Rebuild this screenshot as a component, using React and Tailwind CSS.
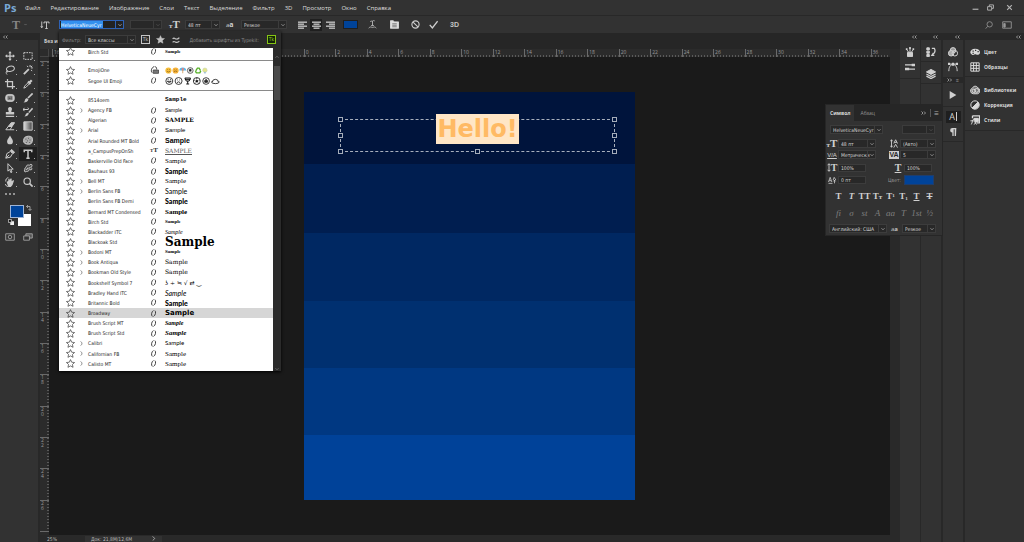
import React from "react";

const UI = "font-['Open_Sans','Noto_Sans',sans-serif]";
const SMALL = "font-['DejaVu_Sans_Condensed','DejaVu_Sans',sans-serif] text-[5px] leading-[6px]";

function Svg({ children, className = "size-[10px]", box = "0 0 12 12", fill = "none" }) {
  return (
    <svg viewBox={box} className={className} fill={fill} stroke="currentColor" strokeWidth="1.2" aria-hidden="true">
      {children}
    </svg>
  );
}

function Chevron({ className = "size-[4px]" }) {
  return (
    <svg viewBox="0 0 8 8" className={className} fill="none" stroke="currentColor" strokeWidth="1.6" aria-hidden="true">
      <path d="M1 2.5 4 5.5 7 2.5" />
    </svg>
  );
}

function DoubleChevron({ left = false }) {
  return (
    <svg viewBox="0 0 10 8" className="h-[4px] w-[5px]" fill="none" stroke="#b0b0b0" strokeWidth="1.6" aria-hidden="true">
      {left ? <path d="M4 1 1 4l3 3M9 1 6 4l3 3" /> : <path d="M1 1l3 3-3 3M6 1l3 3-3 3" />}
    </svg>
  );
}

function Select({ label, value, className = "", disabled = false }) {
  return (
    <span className={`relative flex h-[9px] items-center border border-[#3c3c3c] bg-[#282828] ${className}`}>
      <select
        aria-label={label}
        disabled={disabled}
        defaultValue={value}
        className={`h-full w-full appearance-none bg-transparent pl-[2px] text-[#d6d6d6] outline-none ${SMALL}`}
      >
        <option value={value}>{value}</option>
      </select>
      <span className={`pointer-events-none absolute inset-y-0 right-0 flex w-[8px] items-center justify-center border-l border-[#3c3c3c] ${disabled ? "text-[#505050]" : "text-[#a8a8a8]"}`}>
        <Chevron />
      </span>
    </span>
  );
}

function BigT({ a, b, className = "" }) {
  return (
    <span className={`flex items-baseline font-['Liberation_Serif',serif] font-bold leading-none text-[#d0d0d0] ${className}`}>
      <span className="text-[7px]">{a}</span>
      <span className="text-[11px]">{b}</span>
    </span>
  );
}

/* ---------- menu and options ---------- */

const MENUS = ["Файл", "Редактирование", "Изображение", "Слои", "Текст", "Выделение", "Фильтр", "3D", "Просмотр", "Окно", "Справка"];

function MenuBar() {
  return (
    <header className="flex h-[15px] shrink-0 items-center pl-[4px] pr-[11px]">
      <span className="w-[21px] font-['Open_Sans',sans-serif] text-[11px] font-bold leading-none text-[#79a9d6]">Ps</span>
      <nav className="flex gap-[10px]">
        {MENUS.map((m) => (
          <button key={m} className="text-[6px] leading-[10px] text-[#dedede]">{m}</button>
        ))}
      </nav>
      <div className="ml-auto flex items-center gap-[8px] text-[#b4b4b4]">
        <button aria-label="Свернуть"><Svg className="size-[7px]"><path d="M1 9h10" strokeWidth="2" /></Svg></button>
        <button aria-label="Восстановить"><Svg className="size-[7px]"><path d="M1 4.500h7v6H1zM4 4V1.500h7v6H8.500" strokeWidth="1.600" /></Svg></button>
        <button aria-label="Закрыть" className="ml-[4px]"><Svg className="size-[7px]"><path d="M2 2l8 8M10 2l-8 8" strokeWidth="2" /></Svg></button>
      </div>
    </header>
  );
}

function AlignIcon({ kind }) {
  const x = { left: [0, 0, 0, 0], center: [0, 1.5, 0, 1.5], right: [0, 3, 0, 3] }[kind];
  return (
    <svg viewBox="0 0 9 8" className="h-[8px] w-[9px]" fill="#bdbdbd" aria-hidden="true">
      <rect x={x[0]} y="0.500" width="9" height="1.400" />
      <rect x={x[1]} y="2.500" width="6" height="1.400" />
      <rect x={x[2]} y="4.500" width="9" height="1.400" />
      <rect x={x[3]} y="6.500" width="6" height="1.400" />
    </svg>
  );
}

function OptionsBar() {
  return (
    <section aria-label="Параметры" className="flex h-[18px] shrink-0 items-center border-t border-[#282828] pl-[12px] pr-[12px]">
      <button aria-label="Инструмент Текст" className="flex w-[25px] items-center gap-[4px] text-[#858585]">
        <span className="font-['Liberation_Serif',serif] text-[12px] font-bold leading-none">T</span>
        <Chevron className="size-[3px]" />
      </button>
      <button aria-label="Ориентация текста" className="flex w-[22px] items-center pl-[3px]">
        <svg viewBox="0 0 18 16" className="h-[8px] w-[10px]" fill="none" stroke="#d0d0d0" strokeWidth="1.800" aria-hidden="true">
          <path d="M2.500 1v12M.5 10.500l2 3 2-3M7 5V2h10v3M12 2v13M9.500 15h5" />
        </svg>
      </button>
      <div className="flex h-[9px] w-[65px] items-center border border-[#2f62b5] bg-[#222222] pl-[1px]">
        <input aria-label="Шрифт" defaultValue="HelveticaNeueCyr" className={`h-[7px] w-[42px] bg-[#3390ef] text-white outline-none ${SMALL}`} />
        <button aria-label="Открыть список шрифтов" className="ml-auto flex h-full w-[8px] items-center justify-center border-l border-[#2f62b5] text-[#bdbdbd]"><Chevron /></button>
      </div>
      <Select label="Начертание" value="" disabled className="ml-[6px] w-[32px]" />
      <BigT a="т" b="T" className="ml-[7px] w-[16px]" />
      <Select label="Кегль" value="48 пт" className="w-[35px]" />
      <span className="ml-[6px] flex w-[15px] items-end leading-none text-[#d0d0d0]">
        <span className="text-[6px]">a</span><span className="text-[7px] font-bold">a</span>
      </span>
      <Select label="Сглаживание" value="Резкое" className="w-[46px]" />
      <div className="ml-[9px] flex items-center gap-[2px]">
        <button aria-label="По левому краю" className="flex size-[12px] items-center justify-center"><AlignIcon kind="left" /></button>
        <button aria-label="По центру" aria-pressed="true" className="flex size-[12px] items-center justify-center bg-[#1f1f1f]"><AlignIcon kind="center" /></button>
        <button aria-label="По правому краю" className="flex size-[12px] items-center justify-center"><AlignIcon kind="right" /></button>
      </div>
      <button aria-label="Цвет текста" className="ml-[7px] h-[9px] w-[15px] border border-[#1f1f1f] bg-[#004399]" />
      <button aria-label="Деформированный текст" className="ml-[10px] text-[#b8b8b8]">
        <Svg className="size-[9px]"><path d="M3 2.500C4 .5 5 2 6 1.500S8 0 9 1.500M6 1.500v6M4 7.500h4M1 11c2-3 3.500-1 5-1s3-2 5 1" /></Svg>
      </button>
      <button aria-label="Панели символов и абзацев" className="ml-[13px] text-[#dcdcdc]">
        <Svg className="size-[9px]"><path d="M.5 1h4l1 1.500h6V11H.5z" fill="currentColor" /><path d="M3 5h6M3 7h6M3 9h6" stroke="#555" strokeWidth=".9" /></Svg>
      </button>
      <button aria-label="Отменить" className="ml-[12px] text-[#cfcfcf]"><Svg className="size-[9px]"><circle cx="6" cy="6" r="4.800" strokeWidth="1.500" /><path d="M2.800 2.800l6.400 6.400" strokeWidth="1.500" /></Svg></button>
      <button aria-label="Применить" className="ml-[9px] text-[#cfcfcf]"><Svg className="size-[9px]"><path d="M1 6.500l3.500 4L11.500 1.500" strokeWidth="1.800" /></Svg></button>
      <button className="ml-[12px] font-['Liberation_Sans',sans-serif] text-[7px] font-bold leading-none text-[#c4c4c4]">3D</button>
      <div className="ml-auto flex items-center gap-[9px] text-[#999999]">
        <button aria-label="Поиск"><Svg className="size-[8px]"><circle cx="7" cy="5" r="4" /><path d="M4 8l-3 3.500" /></Svg></button>
        <button aria-label="Рабочая среда"><Svg className="h-[8px] w-[10px]" box="0 0 14 11"><path d="M1 1h12v9H1z" /><path d="M2.500 3.500h2v5h-2z" fill="currentColor" /></Svg></button>
      </div>
    </section>
  );
}

/* ---------- toolbox ---------- */

const TOOLS = [
  ["Перемещение", <><path d="M6 1.500v9M1.500 6h9" strokeWidth="1.500" /><path d="M6 0l2 2.600H4zM6 12l2-2.600H4zM0 6l2.600-2v4zM12 6L9.400 4v4z" fill="currentColor" stroke="none" /></>],
  ["Прямоугольная область", <path d="M1 2h10v8H1z" strokeDasharray="2 1.100" />],
  ["Лассо", <><ellipse cx="6.500" cy="4.500" rx="4.800" ry="3.200" transform="rotate(-12 6.500 4.500)" /><path d="M2.500 6.500c-1.500 1 0 2.500 1 1.500S2 7 1.500 8.500s.5 2 1 3" /></>],
  ["Волшебная палочка", <><path d="M1 11l6-6" strokeWidth="2.200" /><path d="M8.500 0v2.500M11.800 3.500H9.500M5 1l1 1.500M11 7L9.500 6M11 1L9.500 2.500" /></>],
  ["Рамка", <path d="M3 0v9h9M0 3h9v9" strokeWidth="1.500" />],
  ["Пипетка", <><path d="M1 11l1-2.500 4.500-4.500 1.500 1.500L3.500 10z" /><path d="M6 3l3 3M7.500 4.500L10.500 1.500" strokeWidth="2.600" /></>],
  ["Заплатка", <><rect x="1" y="2" width="10" height="8" rx="2.500" fill="currentColor" /><path d="M3.500 4h5v4h-5z" fill="#444" stroke="#777" /><path d="M0 6h12M6 1v10" strokeWidth=".7" strokeDasharray="1 1" /></>],
  ["Кисть", <><path d="M11.500.5L6 6" strokeWidth="2" /><path d="M6.500 7.500C6 10 4 11.500.5 11.500c1.500-1 1.500-2 2-3.500S5 5.500 6.500 7.500z" fill="currentColor" stroke="none" /></>],
  ["Штамп", <path d="M6 0a2.300 2.300 0 0 1 2 3.500L7.500 6H11v3H1V6h3.500L4 3.500A2.300 2.300 0 0 1 6 0zM1 10.500h10V12H1z" fill="currentColor" stroke="none" />],
  ["Архивная кисть", <><path d="M11.500 1.500L7 6.500" strokeWidth="1.800" /><path d="M7 7.500C6.500 10 4.500 11.500 1.500 11.500c1.500-1 1.500-2 2-3S5.500 6 7 7.500z" fill="currentColor" stroke="none" /><path d="M0 3h6C7 3 7 1 5.500 1M1.800 1L0 3l1.800 2" /></>],
  ["Ластик", <><path d="M4 6.500L7.500 2h4L8.500 6.500z" fill="currentColor" /><path d="M1 10.500l3-4h4.500L6 10.500zM6 10.500h5" /></>],
  ["Градиент", <><defs><linearGradient id="grad"><stop stopColor="#e0e0e0" /><stop offset="1" stopColor="#444" /></linearGradient></defs><path d="M1 1h10v10H1z" fill="url(#grad)" /></>],
  ["Размытие", <path d="M6 .5c1.500 3 3.500 4.700 3.500 7.200a3.500 3.500 0 0 1-7 0C2.500 5.200 4.500 3.500 6 .5z" fill="currentColor" stroke="none" />],
  ["Губка", <><path d="M2 3c2-2 7-2 8.500-.5s1 5 0 7-6.500 2-8.500.5-1.500-5 0-7z" fill="#aaa" /><path d="M3 5h1M6 4h1M5 7h1M8 6h1M3.500 9h1M7.500 9h1" stroke="#555" /></>],
  ["Перо", <><path d="M1 11l1.200-5.500L6.500 3 9 5.500 6.500 9.800z" /><path d="M1 11l4-4M6.500 2L8 .5 11.500 4 10 5.500z" fill="currentColor" /></>],
  ["Текст", <path d="M1.500 4V1.500h9V4M6 1.500v9.500M4 11h4" strokeWidth="1.800" />],
  ["Стрелка", <path d="M3.500.8v9l2-2 1.500 3.700 1.400-.6-1.500-3.500h3z" />],
  ["Произвольная фигура", <path d="M1.500 9.500c1.500-1.500 0-3.500 1.500-4s.5-2.500 2.500-3 1.500 1 3-.5 3 .5 2 2-1 1 0 2.500-1 2-2.500 1.500-1 2.500-2.500 2S2.500 12 1.500 9.500zM4 8.500l2-3M6.500 7.500l2.500-3" fill="#4c4c4c" />],
  ["Поворот вида", <><path d="M2 6l2-1.500V2h1.500v2L7 1.500 8 2v3l2-1.500.8 1L9 9.500 7 12H4z" fill="currentColor" stroke="none" /><path d="M1 5.500C.5 3 2 1 4 .8M.5 8.500C1 10.500 2 11 3.500 11.500" /></>],
  ["Масштаб", <><circle cx="5" cy="5" r="3.800" strokeWidth="1.400" /><path d="M8 8l3.500 3.500" strokeWidth="2" /></>],
];

function Toolbox() {
  return (
    <aside aria-label="Инструменты" className="flex w-[40px] shrink-0 flex-col border-r-2 border-[#282828]">
      <div className="flex h-[7px] shrink-0 items-center bg-[#282828] pl-[3px]"><DoubleChevron left /></div>
      <div className="mt-[9px] grid grid-cols-2 px-[1px]">
        {TOOLS.map(([name, art]) => (
          <button
            key={name}
            aria-label={name}
            className={`relative flex h-[14px] items-center justify-center text-[#c9c9c9] ${name === "Текст" ? "bg-[#1f1f1f]" : ""}`}
          >
            <Svg className="size-[10px]">{art}</Svg>
            <span className="absolute bottom-[2px] right-[2px] size-[1px] bg-[#aaaaaa]" />
          </button>
        ))}
      </div>
      <button aria-label="Изменить панель" className="ml-[5px] mt-[1px] flex h-[8px] w-[10px] items-center justify-between">
        <i className="size-[2px] rounded-full bg-[#b5b5b5]" /><i className="size-[2px] rounded-full bg-[#b5b5b5]" /><i className="size-[2px] rounded-full bg-[#b5b5b5]" />
      </button>
      <div className="ml-[8px] mt-[7px] grid w-[26px] grid-cols-[3px_9px_4px_10px] grid-rows-[9px_4px_8px]">
        <button aria-label="Основной цвет" className="z-10 col-start-1 col-end-4 row-start-1 row-end-3 ml-[2px] border border-[#9fb4d4] bg-[#004399]" />
        <button aria-label="Фоновый цвет" className="col-start-3 col-end-5 row-start-2 row-end-4 -ml-[2px] mr-[3px] bg-white" />
        <button aria-label="Поменять цвета" className="col-start-4 row-start-1 flex items-start pl-[2px] text-[#b5b5b5]"><Svg className="size-[6px]"><path d="M1 3h7v7M4 0L1 3l3 3M5 8l3 3 3-3" strokeWidth="1.600" /></Svg></button>
        <button aria-label="Цвета по умолчанию" className="col-start-1 col-end-3 row-start-3 flex items-center">
          <svg viewBox="0 0 8 8" className="size-[6px]" aria-hidden="true"><path d="M3 3h5v5H3z" fill="#eee" /><path d="M.5.5h4v4h-4z" fill="#111" stroke="#ddd" /></svg>
        </button>
      </div>
      <div className="mt-[7px] grid grid-cols-2 px-[1px] text-[#a8a8a8]">
        <button aria-label="Быстрая маска" className="flex justify-center"><Svg className="h-[8px] w-[10px]" box="0 0 14 11"><path d="M1 1h12v9H1z" /><circle cx="7" cy="5.500" r="2.500" fill="#333" /></Svg></button>
        <button aria-label="Режим экрана" className="flex justify-center"><Svg className="h-[8px] w-[10px]" box="0 0 14 11"><path d="M4 1h9v6H4z" fill="#555" /><path d="M1 4h8v6H1z" fill="#333" /></Svg></button>
      </div>
    </aside>
  );
}

/* ---------- font list ---------- */

const FONTS = [
  ["8514oem", 0, "", "font-['Liberation_Mono',monospace] font-bold text-[6px]"],
  ["Agency FB", 1, "O", "font-['Liberation_Sans',sans-serif] text-[5px]"],
  ["Algerian", 0, "O", "font-['DejaVu_Serif',serif] font-bold text-[6px] uppercase"],
  ["Arial", 1, "O", "font-['Liberation_Sans',sans-serif] text-[6px]"],
  ["Arial Rounded MT Bold", 0, "O", "font-['Liberation_Sans',sans-serif] font-bold text-[7px]"],
  ["a_CampusPrepOnSh", 0, "T", "font-['DejaVu_Serif',serif] text-[6px] uppercase underline text-[#555555]"],
  ["Baskerville Old Face", 0, "O", "font-['Liberation_Serif',serif] text-[7px]"],
  ["Bauhaus 93", 0, "O", "font-['Lato',sans-serif] font-black text-[7px]"],
  ["Bell MT", 1, "O", "font-['Liberation_Serif',serif] text-[7px]"],
  ["Berlin Sans FB", 1, "O", "font-['Lato',sans-serif] text-[7px]"],
  ["Berlin Sans FB Demi", 0, "O", "font-['Lato',sans-serif] font-black text-[7px]"],
  ["Bernard MT Condensed", 0, "O", "font-['Liberation_Serif',serif] font-bold text-[7px]"],
  ["Birch Std", 0, "O", "font-['Liberation_Serif',serif] font-bold text-[5px]"],
  ["Blackadder ITC", 0, "O", "font-['Liberation_Serif',serif] italic text-[6px]"],
  ["Blackoak Std", 0, "O", "font-['DejaVu_Serif',serif] font-black text-[12px]"],
  ["Bodoni MT", 1, "O", "font-['Liberation_Serif',serif] font-bold text-[5px]"],
  ["Book Antiqua", 1, "O", "font-['DejaVu_Serif',serif] text-[6px]"],
  ["Bookman Old Style", 1, "O", "font-['DejaVu_Serif',serif] text-[6px]"],
  ["Bookshelf Symbol 7", 0, "O", "font-['DejaVu_Sans',sans-serif] text-[6px]"],
  ["Bradley Hand ITC", 0, "O", "font-['Lato',sans-serif] italic text-[7px]"],
  ["Britannic Bold", 0, "O", "font-['Lato',sans-serif] font-black text-[7px]"],
  ["Broadway", 0, "O", "font-['DejaVu_Sans',sans-serif] font-bold text-[7px]"],
  ["Brush Script MT", 0, "O", "font-['Liberation_Serif',serif] font-bold italic text-[6px]"],
  ["Brush Script Std", 0, "O", "font-['Liberation_Serif',serif] font-bold italic text-[7px]"],
  ["Calibri", 1, "O", "font-['Lato',sans-serif] text-[6px]"],
  ["Californian FB", 1, "O", "font-['Liberation_Serif',serif] text-[7px]"],
  ["Calisto MT", 1, "O", "font-['Liberation_Serif',serif] text-[7px]"],
];

function BigTDark() {
  return (
    <span className="flex items-baseline font-['Liberation_Serif',serif] font-bold leading-none">
      <span className="text-[5px]">T</span><span className="text-[7px]">T</span>
    </span>
  );
}

function FontRow({ name, expandable, kind, selected, children }) {
  return (
    <li role="option" aria-selected={!!selected} className={`flex min-h-0 flex-1 items-center pl-[7px] text-black ${selected ? "bg-[#d6d6d6]" : ""}`}>
      <button aria-label={`В избранное: ${name}`} className="w-[13px]">
        <Svg className="size-[9px]"><path d="M6 .8l1.600 3.500 3.800.4-2.800 2.600.8 3.800L6 9.200l-3.400 1.900.8-3.800L.6 4.700l3.800-.4z" stroke="#333" strokeWidth=".9" /></Svg>
      </button>
      <span className="w-[9px] text-[#444444]">
        {expandable ? <Svg className="size-[5px]"><path d="M4 1c4 3 4 7 0 10" strokeWidth="1.500" /></Svg> : null}
      </span>
      <span className={`w-[62px] whitespace-nowrap text-[#222222] ${SMALL}`}>{name}</span>
      <span className="flex w-[15px] text-[#333333]">
        {kind === "O" && <Svg className="h-[7px] w-[7px]"><path d="M6 1C2.800 2 1.500 9 4 11M6 11c3.500-1.500 4.800-8.500 2.300-10" strokeWidth="1.600" /></Svg>}
        {kind === "T" && <BigTDark />}
        {kind === "E" && <Svg className="h-[8px] w-[9px]"><path d="M5.500 1C1.500 2 0 8 2.500 10M6.500 1c2 0 3 2 2.500 4" strokeWidth="1.500" /><path d="M4 6h8v5H4z" fill="#777" stroke="#444" /></Svg>}
      </span>
      {children}
    </li>
  );
}

function ColourEmoji() {
  return (
    <svg viewBox="0 0 126 20" className="h-[7px] w-[43px]" aria-hidden="true">
      <circle cx="10" cy="10" r="9" fill="#f6bd3a" /><path d="M5 12q5 5 10 0" stroke="#8a6214" strokeWidth="2" fill="none" /><path d="M6 7h2M12 7h2" stroke="#8a6214" strokeWidth="2" />
      <circle cx="31" cy="10" r="9" fill="#f6b23a" /><path d="M26 14q5-5 10 0M27 8h2M33 8h2" stroke="#8a6214" strokeWidth="2" fill="none" />
      <path d="M42 10a10 9 0 0 1 20 0z" fill="#5bb7e8" /><path d="M49 3h6v7h-6z" fill="#e8827a" /><path d="M52 9v9" stroke="#c98a3a" strokeWidth="2" />
      <circle cx="74" cy="10" r="8.500" fill="#e8e8e8" stroke="#333" strokeWidth="2" /><path d="M70 8l4-3 4 3-1.500 5h-5z" fill="#222" />
      <path d="M90 11l5-8h5l4 7M105 11l-3 6H92l-3-5" stroke="#56b028" strokeWidth="4" fill="none" />
      <circle cx="117" cy="9" r="6.500" fill="#e9e58a" stroke="#bdd4b8" strokeWidth="1.500" /><path d="M117 14v5" stroke="#8fb8d8" strokeWidth="4" />
    </svg>
  );
}

function LineEmoji() {
  return (
    <svg viewBox="0 0 166 24" className="h-[8px] w-[55px]" fill="none" stroke="#111" strokeWidth="2.400" aria-hidden="true">
      <circle cx="13" cy="12" r="10.500" /><path d="M7 13q6 8 12 0zM8 8h3M15 8h3" />
      <circle cx="41" cy="12" r="10.500" /><path d="M36 17q5-5 10 0M37 9h2M43 9h2" />
      <path d="M60 3h17l-4 9h-9zM68.500 12v9M64 21h9M60 7h17" strokeWidth="3" />
      <circle cx="96" cy="12" r="10.500" /><path d="M93 11l3-2 3 2-1 4h-4z" fill="#111" /><path d="M96 2v4M87 9l3 1M105 9l-3 1M90 20l2-3M102 20l-2-3" />
      <circle cx="124" cy="12" r="10" /><path d="M120 16v-5l4-4 4 4v5z" fill="#333" />
      <path d="M143 15a9 8 0 0 1 18 0h3q-2 5-12 5t-12-5z" />
    </svg>
  );
}

function FontMenu() {
  return (
    <section aria-label="Список шрифтов" className="absolute left-[59px] top-[31px] z-20 flex h-[340px] w-[222px] flex-col bg-[#2b2b2b] shadow-[0_1px_3px_#000000]">
      <div className={`flex h-[17px] shrink-0 items-center pl-[3px] pr-[5px] text-[#8c8c8c] ${SMALL}`}>
        <span className="w-[23px]">Фильтр:</span>
        <Select label="Фильтр" value="Все классы" className="w-[51px]" />
        <button aria-label="Шрифты Typekit" className="ml-[5px] flex size-[9px] items-center justify-center border border-[#c4c4c4] text-[5px] leading-none text-[#c4c4c4]">Tk</button>
        <button aria-label="Избранные" className="ml-[6px] text-[#c4c4c4]"><Svg className="size-[9px]" fill="currentColor"><path d="M6 .8l1.600 3.500 3.800.4-2.800 2.600.8 3.800L6 9.200l-3.400 1.900.8-3.800L.6 4.700l3.800-.4z" strokeWidth=".5" /></Svg></button>
        <button aria-label="Похожие" className="ml-[7px] text-[#c4c4c4]"><Svg className="size-[8px]"><path d="M1 4.500c2-3 4 0 5 0s3 1 5-2M1 9.500c2-3 4 0 5 0s3 1 5-2" strokeWidth="1.700" /></Svg></button>
        <a href="#typekit" className="ml-auto whitespace-nowrap">Добавить шрифты из Typekit:</a>
        <button aria-label="Добавить из Typekit" className="ml-[8px] flex size-[9px] items-center justify-center border border-[#86c514] bg-[#142408] text-[5px] leading-none text-[#9ad82a]">Tk</button>
      </div>
      <div className="flex min-h-0 flex-1">
        <div className="flex w-[214px] flex-col bg-white">
          <ul role="listbox" aria-label="Недавние шрифты" className="flex h-[13px] shrink-0 flex-col overflow-hidden border-b border-[#8a8a8a] pb-[5px]">
            <FontRow name="Birch Std" kind="O"><span className="font-['Liberation_Serif',serif] text-[5px] font-bold leading-[6px]">Sample</span></FontRow>
          </ul>
          <ul role="listbox" aria-label="Символьные шрифты" className="flex h-[30px] shrink-0 flex-col border-b border-[#8a8a8a] py-[4px]">
            <FontRow name="EmojiOne" kind="E"><ColourEmoji /></FontRow>
            <FontRow name="Segoe UI Emoji" kind="O"><LineEmoji /></FontRow>
          </ul>
          <ul role="listbox" aria-label="Все шрифты" className="flex min-h-0 flex-1 flex-col pb-[2px] pt-[4px]">
            {FONTS.map(([name, expandable, kind, style]) => (
              <FontRow key={name} name={name} expandable={expandable} kind={kind} selected={name === "Broadway"}>
                <span className={`leading-[10px] ${style}`}>{name === "Bookshelf Symbol 7" ? "ʖ ÷ ≒ √ ⇄ ‿" : "Sample"}</span>
              </FontRow>
            ))}
          </ul>
        </div>
        <div className="flex flex-1 flex-col items-center justify-between text-[#777777]">
          <span className="flex h-[18px] rotate-180 items-center"><Chevron /></span>
          <div className="mb-auto h-[34px] w-full border-x border-[#2b2b2b] bg-[#4a4a4a]" />
          <Chevron />
        </div>
      </div>
    </section>
  );
}

/* ---------- document ---------- */

const H_MARKS = Array.from({ length: 27 }, (_, i) => Math.abs(i * 2 - 16));
const V_MARKS = Array.from({ length: 15 }, (_, i) => Math.abs(i * 2 - 2));

function HorizontalRuler() {
  return (
    <div className="h-[8px] flex-1 overflow-hidden bg-[#2b2b2b] pl-[3px]">
      <div className="grid h-full w-[850px] grid-cols-[repeat(27,minmax(0,1fr))]">
        {H_MARKS.map((n, i) => (
          <div key={i} className="border-l border-[#6a6a6a] bg-[repeating-linear-gradient(90deg,#5a5a5a_0_1px,transparent_1px_3px)] bg-[length:100%_2px] bg-bottom bg-no-repeat pl-[1px] text-[5px] leading-[6px] text-[#9a9a9a]">{n}</div>
        ))}
      </div>
    </div>
  );
}

function VerticalRuler() {
  return (
    <div className="w-[9px] shrink-0 overflow-hidden bg-[#2b2b2b] pt-[4px]">
      <div className="grid h-[471px] grid-rows-[repeat(15,minmax(0,1fr))] border-b border-[#6a6a6a]">
        {V_MARKS.map((n, i) => (
          <div key={i} className="flex flex-col border-t border-[#6a6a6a] bg-[repeating-linear-gradient(180deg,#5a5a5a_0_1px,transparent_1px_3px)] bg-[length:2px_100%] bg-right bg-no-repeat pl-[1px] text-[5px] leading-[5px] text-[#9a9a9a]">
            {String(n).split("").map((d, k) => <span key={k}>{d}</span>)}
          </div>
        ))}
      </div>
    </div>
  );
}

const HANDLES = ["-left-[3px] -top-[3px]", "-right-[3px] -top-[3px]", "-left-[3px] top-[13px]", "-right-[3px] top-[13px]", "-left-[3px] -bottom-[3px]", "-right-[3px] -bottom-[3px]", "left-[134px] -bottom-[3px]"];

function Artboard() {
  return (
    <div className="relative grid h-[408px] w-[331px] grid-rows-[72fr_69fr_68fr_67fr_67fr_65fr]">
      <div className="bg-[#00143c]" />
      <div className="bg-[#001e50]" />
      <div className="bg-[#002862]" />
      <div className="bg-[#003070]" />
      <div className="bg-[#003882]" />
      <div className="bg-[#004299]" />
      <div className="absolute left-[36px] top-[27px] h-[33px] w-[275px] border border-dashed border-[#a8b0bd]">
        {HANDLES.map((h) => <i key={h} className={`absolute size-[5px] border border-[#a5adba] bg-[#00143c] ${h}`} />)}
      </div>
      <div className="absolute left-[132px] top-[22px] flex h-[30px] w-[83px] items-center justify-center bg-[#ffe6c6] font-['DejaVu_Sans',sans-serif] text-[24px] font-bold leading-none text-[#ffba64]">Hello!</div>
    </div>
  );
}

function DocumentArea() {
  return (
    <main className="flex min-w-0 flex-1 flex-col">
      <div className="flex h-[16px] shrink-0 items-center bg-[#262626]">
        <button className="h-full bg-[#323232] pl-[4px] pr-[12px] text-[5px] font-bold leading-none text-[#cccccc]">Без и</button>
      </div>
      <div className="flex min-h-0 flex-1">
        <div className="flex min-w-0 flex-1 flex-col">
          <div className="flex shrink-0"><span className="h-[8px] w-[9px] border-b border-r border-[#444444] bg-[#2b2b2b]" /><HorizontalRuler /></div>
          <div className="flex min-h-0 flex-1">
            <VerticalRuler />
            <div className="flex flex-1 items-center justify-center bg-[#1a1a1a]"><Artboard /></div>
          </div>
        </div>
        <div className="w-[10px] shrink-0 bg-[#292929]" />
      </div>
      <footer className={`flex h-[7px] shrink-0 items-center bg-[#292929] text-[#b8b8b8] ${SMALL}`}>
        <span className="w-[45px] pl-[7px]">25%</span>
        <span className="flex w-[77px] items-center justify-between bg-[#323232] px-[6px]"><span>Док: 21,8M/12,6M</span><Svg className="size-[5px]"><path d="M4 1l5 5-5 5" strokeWidth="2" /></Svg></span>
      </footer>
    </main>
  );
}

/* ---------- docks ---------- */

function DockHead() {
  return <div className="flex h-[7px] shrink-0 items-center justify-end bg-[#282828] pr-[3px]"><DoubleChevron left /></div>;
}

function DockIcon({ label, children, active = false }) {
  return (
    <button aria-label={label} className="flex h-[15px] w-full items-center justify-center text-[#d0d0d0]">
      <span className={`flex items-center justify-center ${active ? "h-[12px] w-[15px] bg-[#1f1f1f]" : ""}`}>{children}</span>
    </button>
  );
}

function DockRow({ label, children }) {
  return (
    <button className="flex h-[15px] w-full items-center gap-[4px] pl-[5px] text-[#dadada]">
      <Svg className="size-[10px]">{children}</Svg>
      <span className="text-[5px] font-bold leading-[8px]">{label}</span>
    </button>
  );
}

function Docks() {
  return (
    <div className="flex shrink-0">
      <aside className="flex w-[21px] flex-col border-r border-[#282828]">
        <DockHead />
        <div className="border-b border-[#282828] py-[4px]">
          <DockIcon label="Наборы кистей"><Svg><path d="M3 6.500h6v5H3z" fill="currentColor" /><path d="M4.500 6.500L2 3M6 6V1M7.500 6.500L10 3" strokeWidth="1.200" /><path d="M1 1.500h2v2H1zM5 0h2v2.500H5zM9 1.500h2v2H9z" fill="currentColor" stroke="none" /></Svg></DockIcon>
          <DockIcon label="Кисть"><Svg><path d="M0 3.500h9M3 8.500h9" strokeWidth="1.400" /><path d="M8 2h4v3H8zM0 7h5v3H0z" fill="currentColor" stroke="none" /></Svg></DockIcon>
        </div>
      </aside>
      <aside className="flex w-[22px] flex-col border-r-2 border-[#282828]">
        <DockHead />
        <div className="border-b border-[#282828] pb-[2px] pt-[4px]">
          <DockIcon label="История"><Svg><path d="M1 1h3v2.500H1zM1 5h3v2.500H1zM1 9h3v2.500H1z" fill="currentColor" /><path d="M7 1.500h3c1.500 3 1 6-2.500 8M9 7L7 10h3" strokeWidth="1.500" /></Svg></DockIcon>
        </div>
        <div className="border-b border-[#282828] pb-[2px] pt-[4px]">
          <DockIcon label="Слои"><Svg><path d="M6 .5l5.500 3L6 6.500l-5.500-3z" fill="currentColor" /><path d="M.5 6L6 9l5.500-3M.5 8.500l5.500 3 5.500-3" strokeWidth="1.500" /></Svg></DockIcon>
        </div>
      </aside>
      <aside className="flex w-[22px] flex-col border-r-2 border-[#282828]">
        <DockHead />
        <div className="pb-[3px] pt-[4px]">
          <DockIcon label="Каналы"><Svg><circle cx="6" cy="4" r="3.300" fill="#999" /><circle cx="3.800" cy="7.500" r="3.300" fill="#aaa" /><circle cx="8.200" cy="7.500" r="3.300" /></Svg></DockIcon>
          <DockIcon label="Контуры"><Svg><path d="M1 11c0-5 2-8 5-8s5 3 5 8M1 2.500h10" /><path d="M0 1h2.500v2.500H0zM4.700 1h2.600v3.500H4.700zM9.500 1H12v2.500H9.500z" fill="currentColor" stroke="none" /></Svg></DockIcon>
        </div>
        <div className="flex h-[6px] items-center justify-between bg-[#282828] px-[4px]"><DoubleChevron /><span className="text-[5px] leading-none text-[#999999]">≡</span></div>
        <div className="border-b border-[#282828] py-[4px]">
          <DockIcon label="Операции"><Svg className="size-[8px]"><path d="M1 0l10 6-10 6z" fill="currentColor" stroke="none" /></Svg></DockIcon>
        </div>
        <div className="border-b border-[#282828] py-[2px]">
          <DockIcon label="Символ" active><span className="text-[9px] leading-none">A</span><i className="ml-[1px] h-[9px] w-[1px] bg-[#d0d0d0]" /></DockIcon>
          <DockIcon label="Абзац"><Svg className="size-[8px]"><path d="M11 0H5a3.300 3.300 0 0 0 0 6.600V12h2V2h1.500v10h2z" fill="currentColor" stroke="none" /></Svg></DockIcon>
        </div>
      </aside>
      <aside className="flex w-[59px] flex-col">
        <DockHead />
        <div className="border-b border-[#282828] pb-[2px] pt-[4px]">
          <DockRow label="Цвет"><path d="M6 2c4 0 6 2 6 4.500S9 10 7.500 9 5 10 3 9.500 0 7 .5 5.500 2.500 2 6 2z" fill="currentColor" stroke="none" /><path d="M3 5h1.500M6 4h1.500M9 5.500h1.500M3 7.500h1.500" stroke="#333" strokeWidth="1.500" /></DockRow>
          <DockRow label="Образцы"><path d="M1 1h10v10H1zM1 4.300h10M1 7.600h10M4.300 1v10M7.600 1v10" /></DockRow>
        </div>
        <div className="border-b border-[#282828] pb-[3px] pt-[5px]">
          <DockRow label="Библиотеки"><path d="M4 10.500a3.500 3.500 0 0 1-1-6.800C4 1 8 .5 9.500 3.500c3 1 3 6.500-.5 7z" fill="#777" /><circle cx="4.500" cy="7" r="2" /><circle cx="8" cy="6.500" r="2.300" /></DockRow>
          <DockRow label="Коррекция"><circle cx="6" cy="6" r="5" /><path d="M9.500 2.500A5 5 0 0 1 2.500 9.500z" fill="currentColor" /></DockRow>
          <DockRow label="Стили"><path d="M3 1h8.500v8.500H8M3 1v3" strokeWidth="1.600" /><path d="M5 4h5v4H6z" fill="currentColor" /><path d="M1 11.500c2 0 1.500-7 4-7M.5 7h4M5 7.500l3 4M8 7.500l-3 4" /></DockRow>
        </div>
      </aside>
    </div>
  );
}

/* ---------- character panel ---------- */

function Field({ label, icon, value, width = "w-[38px]", select = false }) {
  return (
    <div className="flex h-[9px] items-center">
      <span className="flex w-[12px] items-center justify-center font-['Liberation_Serif',serif] text-[#cfcfcf]">{icon}</span>
      {select
        ? <Select label={label} value={value} className={width} />
        : <input aria-label={label} defaultValue={value} className={`h-[8px] border border-[#3c3c3c] bg-[#282828] pl-[2px] text-[#d6d6d6] outline-none ${width} ${SMALL}`} />}
    </div>
  );
}

const STYLES = [
  ["Полужирный", <b>T</b>], ["Курсив", <i className="font-bold">T</i>], ["Все прописные", <b>TT</b>], ["Капители", <b>T<span className="text-[7px]">т</span></b>],
  ["Надстрочный", <b>T<sup className="text-[5px]">1</sup></b>], ["Подстрочный", <b>T<sub className="text-[5px]">1</sub></b>], ["Подчёркнутый", <b className="underline">T</b>], ["Зачёркнутый", <b className="line-through">T</b>],
];
const OPENTYPE = ["fi", "σ", "st", "A", "aa", "T", "1st", "½"];

function CharacterPanel() {
  return (
    <section aria-label="Символ" className="absolute right-[81px] top-[104px] z-10 flex w-[118px] flex-col border border-[#262626] bg-[#323232]">
      <div className="flex h-[16px] items-center bg-[#262626] pr-[3px]">
        <button className="h-full bg-[#323232] px-[4px] text-[5px] font-bold leading-none text-[#d8d8d8]">Символ</button>
        <button className="px-[6px] text-[5px] leading-none text-[#969696]">Абзац</button>
        <span className="ml-auto"><DoubleChevron /></span>
        <span className="ml-[4px] border-l border-[#555555] pl-[3px] text-[8px] leading-[8px] text-[#aaaaaa]">≡</span>
      </div>
      <div className="flex justify-between px-[4px] pb-[5px] pt-[4px]">
        <Select label="Гарнитура" value="HelveticaNeueCyr" className="w-[53px]" />
        <Select label="Начертание" value="" disabled className="mr-[3px] w-[33px]" />
      </div>
      <div className="grid grid-cols-[62px_1fr] gap-y-[2px]">
        <Field label="Кегль" select value="48 пт" icon={<BigT a="т" b="T" />} />
        <Field label="Интерлиньяж" select value="(Авто)" width="w-[36px]" icon={<Svg className="size-[9px]"><path d="M2 1v10M.5 3L2 1l1.500 2M.5 9L2 11l1.500-2M5 6l2.500-5L10 6M6 4.500h3M5 11.500L7.500 7l2.500 4.500" /></Svg>} />
        <Field label="Кернинг" select value="Метрически" icon={<span className="font-['Liberation_Sans',sans-serif] text-[6px] leading-none underline">V/A</span>} />
        <Field label="Трекинг" select value="5" width="w-[36px]" icon={<span className="bg-[#d0d0d0] font-['Liberation_Sans',sans-serif] text-[7px] font-bold leading-[8px] text-[#282828]">VA</span>} />
      </div>
      <div className="mt-[4px] grid grid-cols-[62px_1fr] gap-y-[3px]">
        <Field label="Масштаб по вертикали" value="100%" width="w-[28px]" icon={<span className="flex items-center"><Svg className="h-[9px] w-[4px]" box="0 0 5 12"><path d="M2.500 1v10M.5 3l2-2 2 2M.5 9l2 2 2-2" /></Svg><b className="text-[10px] leading-[8px]">T</b></span>} />
        <div className="pl-[4px]"><Field label="Масштаб по горизонтали" value="100%" width="w-[28px]" icon={<b className="text-[10px] leading-[8px] underline">T</b>} /></div>
        <Field label="Смещение базовой линии" value="0 пт" width="w-[28px]" icon={<Svg className="h-[8px] w-[9px]"><path d="M0 9l2.500-7L5 9M1 7h3M7 6l1.500-4L11 6M9 11V6M7.500 8L9 6l1.500 2M0 11h6" /></Svg>} />
        <div className={`flex h-[9px] items-center text-[#999999] ${SMALL}`}><span className="w-[16px]">Цвет:</span><button aria-label="Цвет символов" className="h-[10px] w-[30px] border border-[#1f3d6b] bg-[#004399]" /></div>
      </div>
      <div className="mt-[7px] grid grid-cols-8 px-[6px] font-['Liberation_Serif',serif] text-[9px] leading-[10px] text-[#d0d0d0]">
        {STYLES.map(([n, g]) => <button key={n} aria-label={n} className="h-[10px] whitespace-nowrap">{g}</button>)}
      </div>
      <div className="mt-[7px] grid grid-cols-8 px-[6px] font-['Liberation_Serif',serif] text-[9px] italic leading-[10px] text-[#7f7f7f]">
        {OPENTYPE.map((g) => <button key={g} className="h-[10px]">{g}</button>)}
      </div>
      <div className="flex items-center px-[3px] pb-[2px] pt-[6px]">
        <Select label="Язык" value="Английский: США" className="w-[58px]" />
        <span className="w-[15px] text-center text-[6px] leading-none text-[#c4c4c4]">a<b>a</b></span>
        <Select label="Метод сглаживания" value="Резкое" className="w-[34px]" />
      </div>
    </section>
  );
}

export default function App() {
  return (
    <div className={`relative flex h-screen flex-col overflow-hidden bg-[#323232] ${UI}`}>
      <MenuBar />
      <OptionsBar />
      <div className="flex min-h-0 flex-1">
        <Toolbox />
        <DocumentArea />
        <Docks />
      </div>
      <FontMenu />
      <CharacterPanel />
    </div>
  );
}
